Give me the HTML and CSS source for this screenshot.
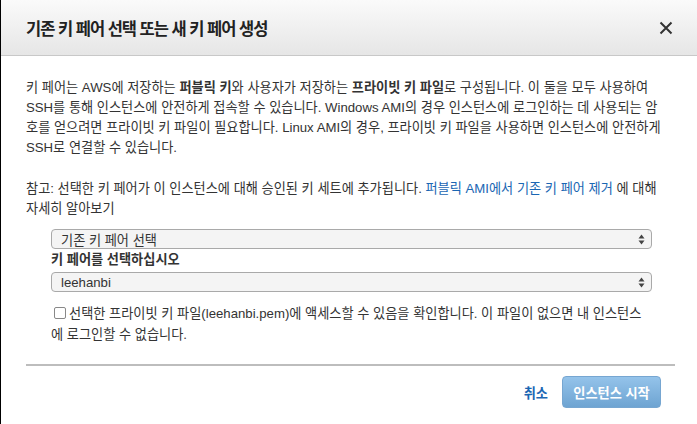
FILE: index.html
```html
<!DOCTYPE html>
<html lang="ko">
<head>
<meta charset="utf-8">
<link rel="stylesheet" href="styles.css">
</head>
<body>
<div class="dialog">
  <div class="header">
    <h1 class="title">기존 키 페어 선택 또는 새 키 페어 생성</h1>
    <svg class="close" width="14" height="14" viewBox="0 0 14 14"><path d="M1.5 1.5 L12.5 12.5 M12.5 1.5 L1.5 12.5" stroke="#333" stroke-width="2" fill="none"/></svg>
  </div>
  <div class="body">
    <p class="para">키 페어는 AWS에 저장하는 <b>퍼블릭 키</b>와 사용자가 저장하는 <b>프라이빗 키 파일</b>로 구성됩니다. 이 둘을 모두 사용하여<br>SSH를 통해 인스턴스에 안전하게 접속할 수 있습니다. Windows AMI의 경우 인스턴스에 로그인하는 데 사용되는 암<br>호를 얻으려면 프라이빗 키 파일이 필요합니다. Linux AMI의 경우, 프라이빗 키 파일을 사용하면 인스턴스에 안전하게<br>SSH로 연결할 수 있습니다.</p>
    <p class="para note">참고: 선택한 키 페어가 이 인스턴스에 대해 승인된 키 세트에 추가됩니다. <a class="link">퍼블릭 AMI에서 기존 키 페어 제거</a> 에 대해<br>자세히 알아보기</p>
    <div class="form">
      <div class="select"><span>기존 키 페어 선택</span><svg class="arrows" width="7" height="11" viewBox="0 0 7 11"><path d="M3.5 0.5 L6.5 4.5 L0.5 4.5 Z M3.5 10.5 L6.5 6.5 L0.5 6.5 Z" fill="#444"/></svg></div>
      <div class="label">키 페어를 선택하십시오</div>
      <div class="select"><span>leehanbi</span><svg class="arrows" width="7" height="11" viewBox="0 0 7 11"><path d="M3.5 0.5 L6.5 4.5 L0.5 4.5 Z M3.5 10.5 L6.5 6.5 L0.5 6.5 Z" fill="#444"/></svg></div>
      <p class="ack"><span class="checkbox"></span>선택한 프라이빗 키 파일(leehanbi.pem)에 액세스할 수 있음을 확인합니다. 이 파일이 없으면 내 인스턴스<br>에 로그인할 수 없습니다.</p>
    </div>
  </div>
  <div class="footer">
    <a class="cancel">취소</a>
    <button class="launch">인스턴스 시작</button>
  </div>
</div>
</body>
</html>
```
FILE: styles.css
```css
html, body {
  margin: 0;
  padding: 0;
  background: #fff;
}
body {
  font-family: "Liberation Sans", "Noto Sans CJK KR", sans-serif;
  color: #333;
  font-size: 13.2px;
}
.dialog {
  width: 697px;
  height: 424px;
  box-sizing: border-box;
  border-left: 1px solid #000;
  display: flex;
  flex-direction: column;
}
.header {
  height: 56px;
  box-sizing: border-box;
  background: linear-gradient(#fafafa, #e6e6e6);
  border-bottom: 1px solid #c8c8c8;
  display: flex;
  align-items: center;
  justify-content: space-between;
  padding: 0 24px 0 25px;
}
.title {
  margin: 0;
  font-size: 16.5px;
  font-weight: bold;
  color: #222;
  letter-spacing: -1px;
}
.close {
  display: block;
  margin-top: 1px;
}
.body {
  padding: 22px 20px 0 25px;
  white-space: nowrap;
}
.para {
  margin: 0;
  line-height: 20px;
}
.note {
  margin-top: 21px;
}
.link {
  color: #1a66b3;
}
.form {
  padding: 10px 25px 0 25px;
}
.select {
  height: 20px;
  box-sizing: border-box;
  border: 1px solid #a9a9a9;
  border-radius: 4px;
  background: #f4f4f4;
  display: flex;
  align-items: center;
  justify-content: space-between;
  padding: 0 6px 0 9px;
}
.arrows {
  display: block;
}
.label {
  font-weight: bold;
  margin: 1px 0 2px;
  line-height: 20px;
}
.ack {
  margin: 11px 0 0;
  line-height: 21px;
}
.checkbox {
  display: inline-block;
  width: 10px;
  height: 10px;
  border: 1px solid #888;
  border-radius: 2px;
  margin: 0 3px 0 3px;
  vertical-align: -1px;
}
.footer {
  margin: auto 22px 0 25px;
  border-top: 2px solid #bdbdbd;
  height: 60px;
  box-sizing: border-box;
  display: flex;
  align-items: center;
  justify-content: flex-end;
  gap: 14px;
  padding-bottom: 6px;
}
.cancel {
  color: #1a66b3;
  font-weight: bold;
}
.launch {
  font-family: inherit;
  font-size: 13.2px;
  font-weight: bold;
  color: #fff;
  width: 99px;
  height: 32px;
  border: 1px solid #76a6d1;
  border-radius: 4px;
  background: linear-gradient(#94c3ea, #6ea4d2);
  margin-right: 14px;
}
```
